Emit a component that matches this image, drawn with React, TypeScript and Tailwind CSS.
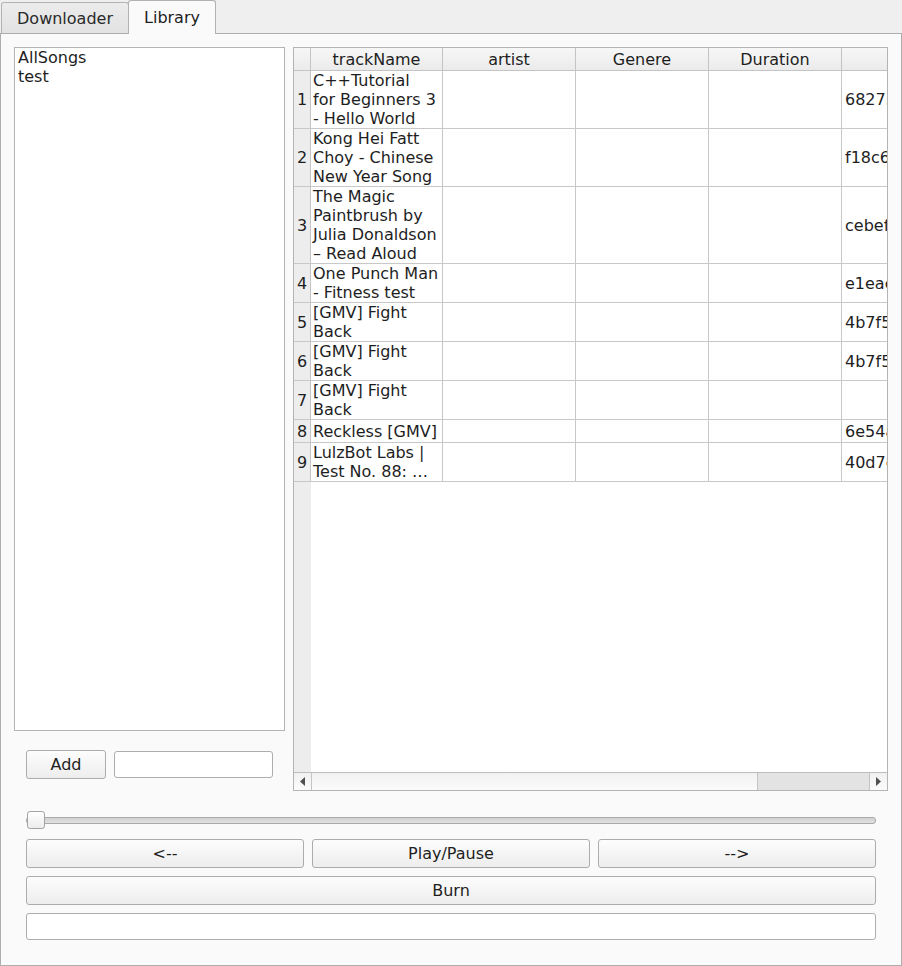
import React from 'react'

const rows: { n: number; lines: string[]; h: number; hash: string }[] = [
  { n: 1, lines: ['C++Tutorial', 'for Beginners 3', '- Hello World'], h: 57, hash: '68273ab91c0e' },
  { n: 2, lines: ['Kong Hei Fatt', 'Choy - Chinese', 'New Year Song'], h: 57, hash: 'f18c6d20e4a1' },
  { n: 3, lines: ['The Magic', 'Paintbrush by', 'Julia Donaldson', '– Read Aloud'], h: 76, hash: 'cebef7a3d901' },
  { n: 4, lines: ['One Punch Man', '- Fitness test'], h: 38, hash: 'e1eac5b73f28' },
  { n: 5, lines: ['[GMV] Fight', 'Back'], h: 38, hash: '4b7f5e0c9a12' },
  { n: 6, lines: ['[GMV] Fight', 'Back'], h: 38, hash: '4b7f5e0c9a12' },
  { n: 7, lines: ['[GMV] Fight', 'Back'], h: 38, hash: '' },
  { n: 8, lines: ['Reckless [GMV]'], h: 22, hash: '6e54a8d1f03b' },
  { n: 9, lines: ['LulzBot Labs |', 'Test No. 88: …'], h: 38, hash: '40d7c2e9b516' },
]

const btn =
  'flex items-center justify-center rounded-[3px] border border-[#acacac] bg-gradient-to-b from-[#fdfdfd] to-[#ededed] text-[16px] text-[#1e1e1e]'

const App = () => {
  return (
    <div className="w-[902px] h-[966px] bg-[#efefef] font-['DejaVu_Sans',sans-serif] text-[16px] leading-[19px] text-[#1e1e1e]">
      {/* tabs */}
      <div className="flex items-end h-[33px] pl-[1px]">
        <div className="w-[128px] h-[31px] flex items-center justify-center border border-b-0 border-[#b2b2b2] rounded-t-[3px] bg-gradient-to-b from-[#ececec] to-[#e2e2e2] text-[#2a2a2a]">
          Downloader
        </div>
        <div className="relative z-10 -ml-px -mb-px w-[88px] h-[34px] flex items-center justify-center border border-b-0 border-[#b2b2b2] rounded-t-[3px] bg-[#fafafa]">
          Library
        </div>
      </div>

      {/* pane */}
      <div className="h-[933px] border border-[#adadad] bg-[#fafafa] p-[13px]">
        <div className="flex gap-[8px] h-[744px]">
          {/* playlists */}
          <div className="w-[271px] flex flex-col">
            <div className="h-[684px] border border-[#b4b4b4] bg-white px-[3px]">
              <div>AllSongs</div>
              <div>test</div>
            </div>
            <div className="mt-[19px] pl-[12px] flex items-center gap-[8px]">
              <button className={`${btn} w-[80px] h-[29px]`}>Add</button>
              <div className="w-[159px] h-[27px] rounded-[3px] border border-[#adadad] bg-white"></div>
            </div>
          </div>

          {/* table */}
          <div className="w-[595px] h-[744px] border border-[#b4b4b4] flex flex-col bg-white overflow-hidden">
            <div className="flex h-[23px] border-b border-[#c4c4c4] bg-gradient-to-b from-[#f7f7f7] to-[#ebebeb] shrink-0">
              <div className="w-[17px] border-r border-[#c4c4c4]"></div>
              <div className="w-[132px] shrink-0 border-r border-[#c4c4c4] flex items-center justify-center">trackName</div>
              <div className="w-[133px] shrink-0 border-r border-[#c4c4c4] flex items-center justify-center">artist</div>
              <div className="w-[133px] shrink-0 border-r border-[#c4c4c4] flex items-center justify-center">Genere</div>
              <div className="w-[133px] shrink-0 border-r border-[#c4c4c4] flex items-center justify-center">Duration</div>
              <div className="flex-1"></div>
            </div>

            <div className="flex-1 flex flex-col min-h-0">
              {rows.map((r) => (
                <div key={r.n} className="flex border-b border-[#c8c8c8] shrink-0" style={{ height: r.h + 1 }}>
                  <div className="w-[17px] shrink-0 border-r border-[#c4c4c4] bg-[#ededed] flex items-center justify-center">
                    {r.n}
                  </div>
                  <div className="w-[132px] shrink-0 border-r border-[#c8c8c8] flex flex-col justify-center pl-[2px] whitespace-nowrap overflow-hidden">
                    {r.lines.map((l, i) => (
                      <div key={i}>{l}</div>
                    ))}
                  </div>
                  <div className="w-[133px] shrink-0 border-r border-[#c8c8c8]"></div>
                  <div className="w-[133px] shrink-0 border-r border-[#c8c8c8]"></div>
                  <div className="w-[133px] shrink-0 border-r border-[#c8c8c8]"></div>
                  <div className="flex-1 min-w-0 flex items-center pl-[3px] whitespace-nowrap overflow-hidden">{r.hash}</div>
                </div>
              ))}
              <div className="flex-1 flex">
                <div className="w-[17px] bg-[#ededed]"></div>
                <div className="flex-1"></div>
              </div>
            </div>

            {/* horizontal scrollbar */}
            <div className="flex h-[18px] border-t border-[#bdbdbd] bg-gradient-to-b from-[#f1f1f1] to-[#fbfbfb] shrink-0">
              <div className="w-[18px] border-r border-[#c4c4c4] flex items-center justify-center">
                <svg width="5" height="9" viewBox="0 0 5 9"><path d="M5 0 L0 4.5 L5 9 Z" fill="#505050" /></svg>
              </div>
              <div className="flex-1"></div>
              <div className="w-[112px] bg-[#e3e3e3] border-l border-[#c4c4c4]"></div>
              <div className="w-[18px] border-l border-[#c4c4c4] flex items-center justify-center">
                <svg width="5" height="9" viewBox="0 0 5 9"><path d="M0 0 L5 4.5 L0 9 Z" fill="#505050" /></svg>
              </div>
            </div>
          </div>
        </div>

        {/* player controls */}
        <div className="px-[12px]">
          <div className="relative mt-[20px] h-[18px] flex items-center">
            <div className="w-full h-[7px] rounded-[3px] border border-[#a9a9a9] bg-gradient-to-b from-[#d2d2d2] to-[#e0e0e0]"></div>
            <div className="absolute left-[1px] top-0 w-[18px] h-[18px] rounded-[3px] border border-[#a4a4a4] bg-gradient-to-b from-[#ffffff] to-[#ececec]"></div>
          </div>
          <div className="mt-[10px] grid grid-cols-3 gap-[8px]">
            <button className={`${btn} h-[29px]`}>&lt;--</button>
            <button className={`${btn} h-[29px]`}>Play/Pause</button>
            <button className={`${btn} h-[29px]`}>--&gt;</button>
          </div>
          <button className={`${btn} mt-[8px] w-full h-[29px]`}>Burn</button>
          <div className="mt-[8px] h-[27px] rounded-[3px] border border-[#adadad] bg-white"></div>
        </div>
      </div>
    </div>
  )
}

export default App
